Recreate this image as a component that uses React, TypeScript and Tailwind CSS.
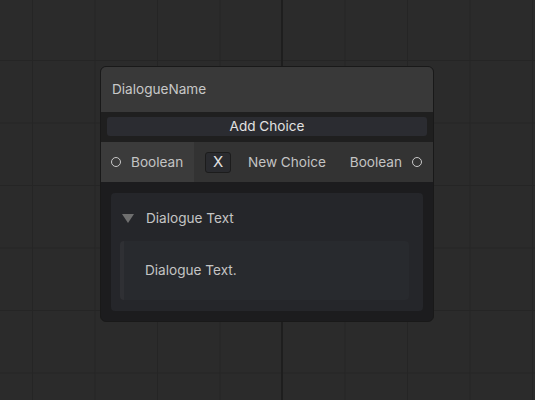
export default function App() {
    return (
        <div className="relative h-[400px] w-full overflow-hidden bg-[#2b2b2b] bg-[linear-gradient(to_right,#252525_1px,transparent_1px),linear-gradient(to_bottom,#252525_1px,transparent_1px)] bg-[size:62.5px_62.5px] bg-[position:32px_60px] font-['Inter','Liberation_Sans',sans-serif] text-[13.6px]">
            {/* major grid line */}
            <div className="absolute top-0 left-[281px] h-full w-[2px] bg-[#1e1e1e]" />

            <div className="absolute top-[66px] left-[100px] w-[334px] overflow-hidden rounded-[6px] border border-[#191919] bg-[#1c1c1e]">
                <div className="flex h-[45px] items-center bg-[#393939] px-[11px] text-[#c8c8c8]">DialogueName</div>

                <div className="h-[30px] bg-[#1f1f1f] px-[6px] pt-[5px]">
                    <button className="flex h-[19px] w-full items-center justify-center rounded-[3px] bg-[#2b2c31] text-[#e2e2e2]">
                        Add Choice
                    </button>
                </div>

                <div className="flex h-[40px]">
                    <div className="flex w-[93px] items-center gap-[10px] bg-[#3b3b3b] pl-[10px] text-[#c4c4c4]">
                        <span className="h-[10px] w-[10px] rounded-full border-[1.5px] border-[#c8c8c8]" />
                        Boolean
                    </div>
                    <div className="flex flex-1 items-center bg-[#333333] pr-[11px] pl-[11px] text-[#c4c4c4]">
                        <button className="flex h-[21px] w-[26px] items-center justify-center rounded-[3px] border border-[#1c1c1c] bg-[#2a2b2f] text-[15px] text-[#e2e2e2]">
                            X
                        </button>
                        <span className="ml-[17px]">New Choice</span>
                        <span className="ml-auto">Boolean</span>
                        <span className="ml-[10px] h-[10px] w-[10px] rounded-full border-[1.5px] border-[#c8c8c8]" />
                    </div>
                </div>

                <div className="px-[10px] pt-[11px] pb-[10px]">
                    <div className="h-[118px] rounded-[4px] bg-[#25262a] pt-[17px] pr-[14px] pl-[9px]">
                        <div className="flex h-[16px] items-center text-[#c4c4c4]">
                            <svg width="12" height="9" viewBox="0 0 12 9" className="ml-[2px]">
                                <path d="M0 0 L12 0 L6 9 Z" fill="#6f6f6f" />
                            </svg>
                            <span className="ml-[12px]">Dialogue Text</span>
                        </div>
                        <div className="mt-[15px] flex h-[59px] items-center rounded-[4px] border-l-[4px] border-[#2f3034] bg-[#282a2e] pl-[21px] text-[#c4c4c4]">
                            Dialogue Text.
                        </div>
                    </div>
                </div>
            </div>
        </div>
    );
}
